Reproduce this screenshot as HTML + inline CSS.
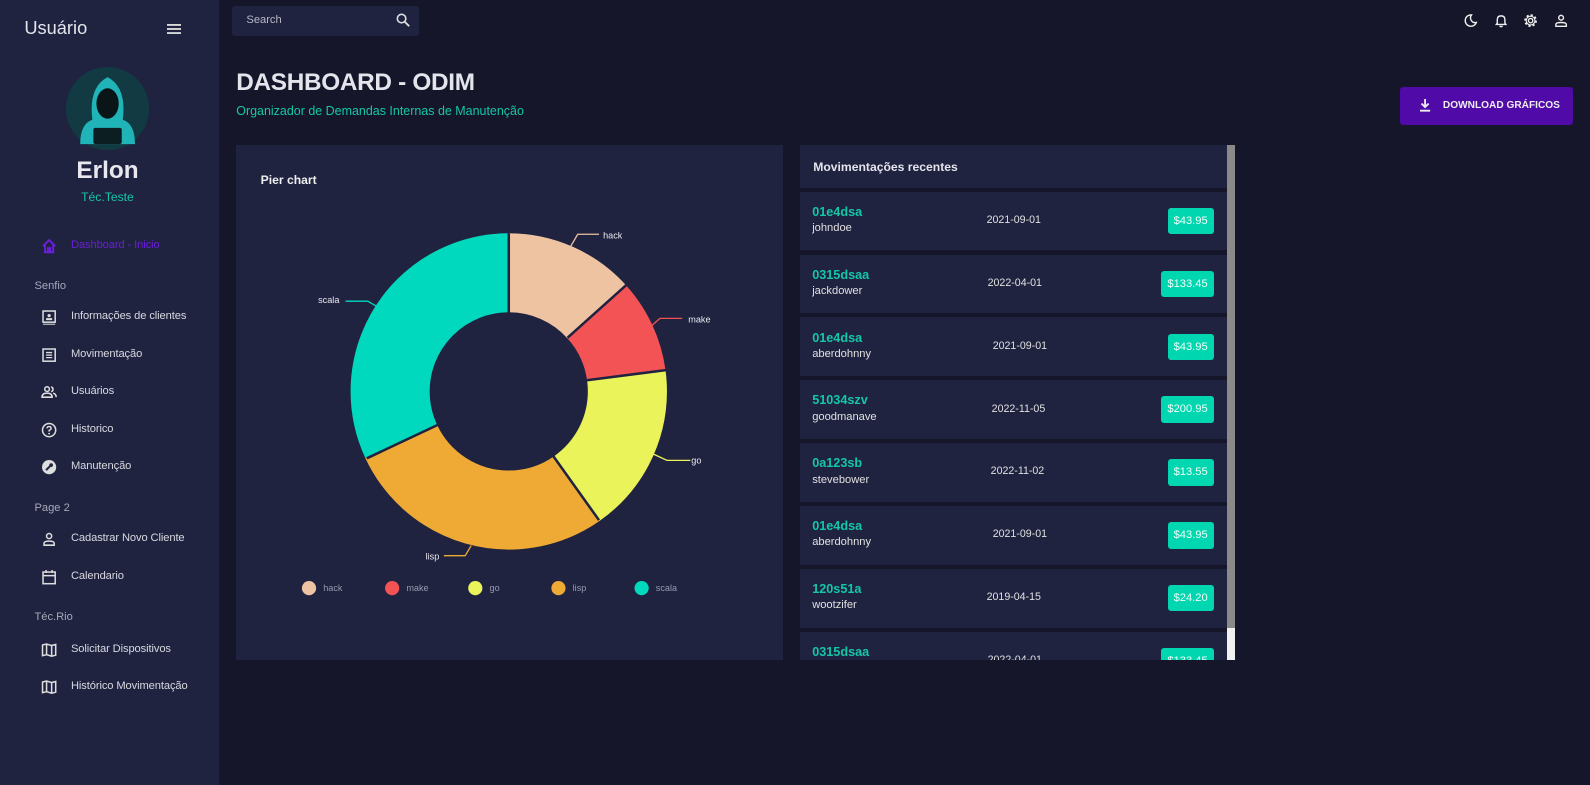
<!DOCTYPE html>
<html><head><meta charset="utf-8"><style>
html,body{margin:0;padding:0;}
body{width:1568px;height:774px;overflow:hidden;background:#151629;font-family:"Liberation Sans",sans-serif;color:#e0e0e0;zoom:1.014;position:relative}
.sb{position:absolute;left:0;top:0;width:216px;height:774px;background:#1f2340}
.abs{position:absolute}
.nav{position:absolute;left:70px;font-size:11px;color:#d8d8e0;letter-spacing:-0.1px}
.ic{position:absolute;left:40px;width:16px;height:16px}
.sec{position:absolute;left:34px;font-size:11px;color:#a8a8b8}
.panel{position:absolute;background:#1f2340}
.row{position:absolute;left:789px;width:421px;height:58px;background:#1f2340}
.row .id{position:absolute;left:12px;top:13px;color:#14c7a6;font-weight:bold;font-size:12.5px}
.row .u{position:absolute;left:12px;top:30px;font-size:11px;color:#e0e0e0}
.row .d{position:absolute;top:22px;font-size:10.5px;color:#e0e0e0}
.row .p{position:absolute;right:13px;top:16px;height:26px;line-height:26px;padding:0 6px;background:#00d6b0;border-radius:3px;color:#f0fff8;font-size:11px}
</style></head><body>
<div class="sb">
 <div class="abs" style="left:24px;top:17px;font-size:18px;color:#e4e4ec">Usuário</div>
 <svg class="abs" style="left:165px;top:23px" width="14" height="12"><rect y="1" width="14" height="1.8" fill="#ddd"/><rect y="5" width="14" height="1.8" fill="#ddd"/><rect y="9" width="14" height="1.8" fill="#ddd"/></svg>
 <svg class="abs" style="left:65px;top:66px" width="82" height="82"><circle cx="41" cy="41" r="41" fill="#123a42"/><path d="M14 76 Q14 56 26 52 Q22 20 41 10 Q60 20 56 52 Q68 56 68 76Z" fill="#20b4b8"/><ellipse cx="41" cy="36" rx="11" ry="15" fill="#0a1518"/><rect x="27" y="60" width="28" height="16" rx="2" fill="#0c1e22"/></svg>
 <div class="abs" style="left:0;width:212px;text-align:center;top:155px;font-size:24px;font-weight:bold;color:#e8e8ee">Erlon</div>
 <div class="abs" style="left:0;width:212px;text-align:center;top:187px;font-size:12px;color:#14c7a6">Téc.Teste</div>
 <svg class="ic" style="top:235px" viewBox="0 0 16 16"><path d="M2 8 L8 2 L14 8 M4 7 V14 H12 V7 M7 14 V10 H9 V14" stroke="#6a1fd6" stroke-width="2" fill="none"/></svg>
 <div class="nav" style="top:236px;color:#6a1fd6">Dashboard - Inicio</div>
 <div class="sec" style="top:276px">Senfio</div>
 <svg class="ic" style="top:305px" viewBox="0 0 16 16"><rect x="2" y="2" width="12" height="11" stroke="#ddd" stroke-width="1.5" fill="none"/><circle cx="8" cy="6.5" r="1.6" fill="#ddd"/><rect x="5" y="9" width="6" height="2" fill="#ddd"/><rect x="2" y="14.5" width="12" height="1" fill="#ddd"/></svg>
 <div class="nav" style="top:306px">Informações de clientes</div>
 <svg class="ic" style="top:342px" viewBox="0 0 16 16"><rect x="2" y="2" width="12" height="12" stroke="#ddd" stroke-width="1.5" fill="none"/><path d="M5 5.5H11M5 8H11M5 10.5H11" stroke="#ddd" stroke-width="1.3"/></svg>
 <div class="nav" style="top:343px">Movimentação</div>
 <svg class="ic" style="top:379px" viewBox="0 0 16 16"><circle cx="6" cy="5" r="2.3" stroke="#ddd" stroke-width="1.5" fill="none"/><path d="M1 13 Q1 9 6 9 Q11 9 11 13Z M10 3 A2.3 2.3 0 0 1 10 7.5 M12 9 Q15 10 15 13" stroke="#ddd" stroke-width="1.5" fill="none"/></svg>
 <div class="nav" style="top:380px">Usuários</div>
 <svg class="ic" style="top:416px" viewBox="0 0 16 16"><circle cx="8" cy="8" r="6.5" stroke="#ddd" stroke-width="1.5" fill="none"/><path d="M6 6.3 Q6 4.5 8 4.5 Q10 4.5 10 6.3 Q10 7.5 8 8.3 V9.5" stroke="#ddd" stroke-width="1.4" fill="none"/><circle cx="8" cy="11.5" r=".9" fill="#ddd"/></svg>
 <div class="nav" style="top:417px">Historico</div>
 <svg class="ic" style="top:453px" viewBox="0 0 16 16"><circle cx="8" cy="8" r="7" fill="#ddd"/><path d="M5 11 L9 7" stroke="#1f2340" stroke-width="2"/><circle cx="10" cy="6" r="1.8" fill="#1f2340"/></svg>
 <div class="nav" style="top:454px">Manutenção</div>
 <div class="sec" style="top:495px">Page 2</div>
 <svg class="ic" style="top:524px" viewBox="0 0 16 16"><circle cx="8" cy="5" r="2.5" stroke="#ddd" stroke-width="1.5" fill="none"/><path d="M3 14 V12 Q3 10 8 10 Q13 10 13 12 V14Z" stroke="#ddd" stroke-width="1.5" fill="none"/></svg>
 <div class="nav" style="top:525px">Cadastrar Novo Cliente</div>
 <svg class="ic" style="top:561px" viewBox="0 0 16 16"><rect x="2" y="3" width="12" height="11.5" stroke="#ddd" stroke-width="1.5" fill="none"/><path d="M2 6.5H14M5 1V4M11 1V4" stroke="#ddd" stroke-width="1.5"/></svg>
 <div class="nav" style="top:562px">Calendario</div>
 <div class="sec" style="top:603px">Téc.Rio</div>
 <svg class="ic" style="top:633px" viewBox="0 0 16 16"><path d="M1.5 3 L5.5 2 L10.5 3.5 L14.5 2.5 V13 L10.5 14 L5.5 12.5 L1.5 13.5Z M5.5 2V12.5 M10.5 3.5V14" stroke="#ddd" stroke-width="1.5" fill="none"/></svg>
 <div class="nav" style="top:634px">Solicitar Dispositivos</div>
 <svg class="ic" style="top:670px" viewBox="0 0 16 16"><path d="M1.5 3 L5.5 2 L10.5 3.5 L14.5 2.5 V13 L10.5 14 L5.5 12.5 L1.5 13.5Z M5.5 2V12.5 M10.5 3.5V14" stroke="#ddd" stroke-width="1.5" fill="none"/></svg>
 <div class="nav" style="top:671px">Histórico Movimentação</div>
</div>

<div class="abs" style="left:229px;top:6px;width:184px;height:30px;background:#1f2340;border-radius:3px"></div>
<div class="abs" style="left:243px;top:14px;font-size:11px;color:#b8b8c8">Search</div>
<svg class="abs" style="left:391px;top:13px" width="14" height="14" viewBox="0 0 14 14"><circle cx="5.5" cy="5.5" r="4.2" stroke="#ddd" stroke-width="1.6" fill="none"/><path d="M8.5 8.5L13 13" stroke="#ddd" stroke-width="1.8"/></svg>

<svg class="abs" style="left:1443px;top:13px" width="15" height="15" viewBox="0 0 16 16"><path d="M9 2 A6 6 0 1 0 14 10 A5 5 0 0 1 9 2Z" stroke="#eee" stroke-width="1.5" fill="none"/></svg>
<svg class="abs" style="left:1473px;top:13px" width="14" height="15" viewBox="0 0 14 16"><path d="M2 12 H12 L11 10.5 V7 Q11 3 7 3 Q3 3 3 7 V10.5Z M5.5 13.5 Q7 15.5 8.5 13.5" stroke="#eee" stroke-width="1.5" fill="none"/></svg>
<svg class="abs" style="left:1502px;top:13px" width="15" height="15" viewBox="0 0 16 16"><circle cx="8" cy="8" r="2.3" stroke="#eee" stroke-width="1.5" fill="none"/><circle cx="8" cy="8" r="5.5" stroke="#eee" stroke-width="2.4" stroke-dasharray="2.2 2.1" fill="none"/><circle cx="8" cy="8" r="4.6" stroke="#eee" stroke-width="1.2" fill="none"/></svg>
<svg class="abs" style="left:1533px;top:13px" width="14" height="15" viewBox="0 0 14 16"><circle cx="7" cy="5" r="2.5" stroke="#eee" stroke-width="1.5" fill="none"/><path d="M1.5 14 V12 Q1.5 10 7 10 Q12.5 10 12.5 12 V14Z" stroke="#eee" stroke-width="1.5" fill="none"/></svg>

<div class="abs" style="left:233px;top:68px;font-size:24px;font-weight:bold;color:#e4e4ec;letter-spacing:-0.3px">DASHBOARD - ODIM</div>
<div class="abs" style="left:233px;top:103px;font-size:12.3px;color:#14c7a6">Organizador de Demandas Internas de Manutenção</div>

<div class="abs" style="left:1381px;top:86px;width:170px;height:37px;background:#4f0aa8;border-radius:3px"></div>
<svg class="abs" style="left:1399px;top:97px" width="12" height="14" viewBox="0 0 12 14"><path d="M6 1V9 M2.5 5.5 L6 9 L9.5 5.5 M1 12.5H11" stroke="#eee" stroke-width="1.8" fill="none"/></svg>
<div class="abs" style="left:1423px;top:99px;font-size:10px;font-weight:bold;color:#eee">DOWNLOAD GRÁFICOS</div>

<div class="panel" style="left:233px;top:143px;width:539px;height:508px"></div>
<div class="abs" style="left:257px;top:171px;font-size:12px;font-weight:bold;color:#eee">Pier chart</div>
<svg class="abs" style="left:233px;top:143px" width="539" height="508">
 <g transform="translate(269,243) rotate(-90)" fill="none" stroke-width="78">
  <circle r="117" stroke="#edc3a2" stroke-dasharray="98 700"/>
  <circle r="117" stroke="#f35355" stroke-dasharray="69.4 700" stroke-dashoffset="-98"/>
  <circle r="117" stroke="#ebf35a" stroke-dasharray="128.6 700" stroke-dashoffset="-167.4"/>
  <circle r="117" stroke="#eeaa35" stroke-dasharray="204.2 700" stroke-dashoffset="-296"/>
  <circle r="117" stroke="#00d9bd" stroke-dasharray="234.9 700" stroke-dashoffset="-500.2"/>
 </g>
 <g stroke="#1f2340" stroke-width="2.5">
  <line x1="269" y1="87" x2="269" y2="166"/>
  <line x1="385" y1="138" x2="327" y2="190"/>
  <line x1="424" y1="222" x2="346" y2="232"/>
  <line x1="358" y1="370" x2="313" y2="307"/>
  <line x1="129" y1="309" x2="199" y2="276"/>
 </g>
 <g fill="none" stroke-width="1.3">
  <path d="M330 100 L337 88 H358" stroke="#edc3a2"/>
  <path d="M408 180 L418 171 H440" stroke="#f35355"/>
  <path d="M412 305 L425 311 H448" stroke="#ebf35a"/>
  <path d="M232 395 L226 405 H205" stroke="#eeaa35"/>
  <path d="M140 160 L130 154 H108" stroke="#00d9bd"/>
 </g>
 <g font-size="9" fill="#e8e8ee" font-family="Liberation Sans,sans-serif">
  <text x="362" y="92">hack</text><text x="446" y="175">make</text><text x="449" y="314">go</text><text x="187" y="409">lisp</text><text x="81" y="156">scala</text>
 </g>
 <g font-size="9" fill="#9a9aac" font-family="Liberation Sans,sans-serif">
  <circle cx="72" cy="437" r="7" fill="#edc3a2"/><text x="86" y="440">hack</text>
  <circle cx="154" cy="437" r="7" fill="#f35355"/><text x="168" y="440">make</text>
  <circle cx="236" cy="437" r="7" fill="#ebf35a"/><text x="250" y="440">go</text>
  <circle cx="318" cy="437" r="7" fill="#eeaa35"/><text x="332" y="440">lisp</text>
  <circle cx="400" cy="437" r="7" fill="#00d9bd"/><text x="414" y="440">scala</text>
 </g>
</svg>

<div class="panel" style="left:789px;top:143px;width:421px;height:42px"></div>
<div class="abs" style="left:802px;top:158px;font-size:12px;font-weight:bold;color:#e4e4ec">Movimentações recentes</div>
<div class="row" style="top:189px"><div class="id">01e4dsa</div><div class="u">johndoe</div><div class="d" style="left:184px">2021-09-01</div><div class="p">$43.95</div></div>
<div class="row" style="top:251px"><div class="id">0315dsaa</div><div class="u">jackdower</div><div class="d" style="left:185px">2022-04-01</div><div class="p">$133.45</div></div>
<div class="row" style="top:313px"><div class="id">01e4dsa</div><div class="u">aberdohnny</div><div class="d" style="left:190px">2021-09-01</div><div class="p">$43.95</div></div>
<div class="row" style="top:375px"><div class="id">51034szv</div><div class="u">goodmanave</div><div class="d" style="left:189px">2022-11-05</div><div class="p">$200.95</div></div>
<div class="row" style="top:437px"><div class="id">0a123sb</div><div class="u">stevebower</div><div class="d" style="left:188px">2022-11-02</div><div class="p">$13.55</div></div>
<div class="row" style="top:499px"><div class="id">01e4dsa</div><div class="u">aberdohnny</div><div class="d" style="left:190px">2021-09-01</div><div class="p">$43.95</div></div>
<div class="row" style="top:561px"><div class="id">120s51a</div><div class="u">wootzifer</div><div class="d" style="left:184px">2019-04-15</div><div class="p">$24.20</div></div>
<div class="abs" style="left:789px;top:623px;width:421px;height:28px;overflow:hidden"><div class="row" style="left:0;top:0"><div class="id">0315dsaa</div><div class="u">jackdower</div><div class="d" style="left:185px">2022-04-01</div><div class="p">$133.45</div></div></div>
<div class="abs" style="left:1210px;top:143px;width:8px;height:508px;background:#f1f1f1"></div>
<div class="abs" style="left:1210px;top:143px;width:8px;height:476px;background:#8a8a8a"></div>
</body></html>
